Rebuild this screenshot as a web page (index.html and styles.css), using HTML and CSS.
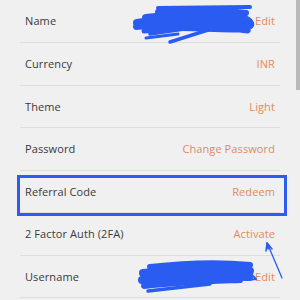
FILE: index.html
```html
<!DOCTYPE html>
<html>
<head>
<meta charset="utf-8">
<link rel="stylesheet" href="styles.css">
</head>
<body>
<div class="screen">
  <div class="list">
    <div class="row first"><span class="label">Name</span><span class="value">Edit</span></div>
    <div class="row"><span class="label">Currency</span><span class="value">INR</span></div>
    <div class="row"><span class="label">Theme</span><span class="value">Light</span></div>
    <div class="row"><span class="label">Password</span><span class="value">Change Password</span></div>
    <div class="row"><span class="label">Referral Code</span><span class="value">Redeem</span></div>
    <div class="row"><span class="label">2 Factor Auth (2FA)</span><span class="value">Activate</span></div>
    <div class="row"><span class="label">Username</span><span class="value">Edit</span></div>
  </div>
  <div class="scrollbar"></div>
  <div class="highlight"></div>
  <svg class="ink" width="300" height="300" viewBox="0 0 300 300">
    <g fill="none" stroke="#2a5cf2" stroke-linecap="round" stroke-linejoin="round">
      <path d="M158 8 L250 7" stroke-width="4"/>
      <path d="M158 12 C190 10 225 10 246 13" stroke-width="6"/>
      <path d="M146 18 C180 14 215 15 240 17 C250 21 254 25 246 27" stroke-width="8"/>
      <path d="M137 23 C170 18 205 20 238 22 L245 28 C230 30 190 26 150 27" stroke-width="8"/>
      <path d="M136 27 C170 23 210 25 235 26" stroke-width="6"/>
      <path d="M144 31 C170 29 200 27 224 26" stroke-width="5"/>
      <path d="M150 34 L205 26" stroke-width="3.5"/>
      <path d="M170 42 L208 30" stroke-width="3.5"/>
      <path d="M146 38 L178 34" stroke-width="3"/>
      <path d="M237 24 C245 27 252 30 248 32 C240 32 236 29 237 26" stroke-width="3"/>
      <path d="M150 267 C185 263 220 262 250 265" stroke-width="6"/>
      <path d="M143 273 C185 269 220 269 250 271" stroke-width="8"/>
      <path d="M142 280 C180 276 220 276 249 277" stroke-width="8"/>
      <path d="M144 286 C180 282 215 281 240 280" stroke-width="6"/>
      <path d="M148 291 L210 284" stroke-width="3.5"/>
      <path d="M240 276 L252 275 L256 279 L248 280" stroke-width="2"/>
      <path d="M282 278 L268 245" stroke-width="1.3"/>
      <path d="M267 243 L266 251 M267 243 L272 249" stroke-width="1.6"/>
      <path d="M267 243 L268 249 L270 247 Z" fill="#2a5cf2" stroke-width="1.5"/>
    </g>
  </svg>
</div>
</body>
</html>
```

FILE: styles.css
```css
html, body {
  margin: 0;
  padding: 0;
}
body {
  width: 300px;
  height: 300px;
  overflow: hidden;
  background: #efefef;
  font-family: "Open Sans", "Noto Sans", sans-serif;
}
.screen {
  position: relative;
  width: 300px;
  height: 300px;
  overflow: hidden;
  background: #f0f0f0;
}
.list {
  display: flex;
  flex-direction: column;
  padding: 0 20px;
}
.row {
  display: flex;
  justify-content: space-between;
  align-items: center;
  height: 41.5px;
  padding: 0 5px 0 5px;
  border-bottom: 1px solid #dedede;
  font-size: 11px;
  line-height: 1;
  letter-spacing: 0.1px;
}
.row.first {
  height: 40px;
  padding-bottom: 2px;
}
.label {
  color: #3a3a3a;
}
.value {
  color: #e38a5a;
}
.scrollbar {
  position: absolute;
  top: 0;
  right: 0;
  width: 4px;
  height: 90px;
  background: #b9b9b9;
}
.highlight {
  position: absolute;
  left: 17px;
  top: 175px;
  width: 264px;
  height: 35px;
  border: 3px solid #2d5cf0;
}
.ink {
  position: absolute;
  left: 0;
  top: 0;
}
```
